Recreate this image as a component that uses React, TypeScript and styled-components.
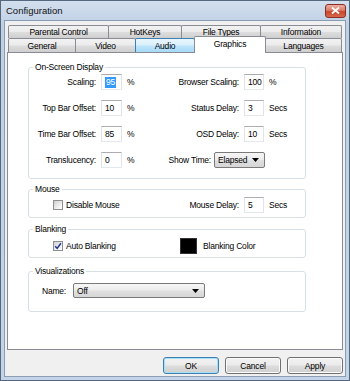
import * as React from "react";
import styled, { createGlobalStyle } from "styled-components";

const UI_FONT = `"Liberation Sans", Arial, sans-serif`;

const GlobalStyle = createGlobalStyle`
	html, body {
		margin: 0;
		padding: 0;
		background: #c5d5e8;
	}
	body {
		font-family: ${UI_FONT};
		font-size: 8.5px;
		letter-spacing: -0.2px;
		color: #000;
	}
	* {
		box-sizing: border-box;
	}
`;

const Window = styled.div`
	width: 350px;
	height: 381px;
	display: flex;
	flex-direction: column;
	border: 1px solid #55687d;
	background: linear-gradient(#d3dfee, #bfd0e5 24px, #c4d4e8);
`;

const TitleBar = styled.div`
	height: 19px;
	display: flex;
	align-items: center;
	justify-content: space-between;
	padding: 0 3px 0 5px;
`;

const Title = styled.span`
	font-size: 9.5px;
	letter-spacing: 0;
	color: #111;
`;

const CloseButton = styled.div`
	width: 21px;
	height: 14px;
	border: 1px solid #8b2d22;
	border-radius: 3px;
	background: linear-gradient(#eab1a4, #d97a67 45%, #c8452c 55%, #d66a4c);
	display: flex;
	align-items: center;
	justify-content: center;
`;

const Body = styled.div`
	flex: 1;
	margin: 0 3px 3px;
	border: 1px solid #8a9cb2;
	background: #f0f0f0;
	padding: 4px 2px 2px 2px;
	display: flex;
	flex-direction: column;
`;

const TabRow = styled.div`
	display: flex;
	padding-left: 1px;
`;

type TabState = "normal" | "hot" | "selected";

const Tab = styled.div<{ $w: number; $h: number; $state?: TabState }>`
	position: relative;
	width: ${(p) => p.$w}px;
	height: ${(p) => (p.$state === "selected" ? p.$h + 3 : p.$h)}px;
	margin-right: -1px;
	margin-top: ${(p) => (p.$state === "selected" ? -2 : 0)}px;
	margin-bottom: ${(p) => (p.$state === "selected" ? -1 : 0)}px;
	padding-bottom: ${(p) => (p.$state === "selected" ? 3 : 0)}px;
	z-index: ${(p) => (p.$state === "normal" || !p.$state ? 0 : 1)};
	border: 1px solid ${(p) => (p.$state === "hot" ? "#3c7fb1" : "#898c95")};
	border-bottom: none;
	border-radius: 2px 2px 0 0;
	background: ${(p) =>
		p.$state === "selected"
			? "#fff"
			: p.$state === "hot"
			? "linear-gradient(#eaf6fd, #d9f0fc 48%, #bee6fd 52%, #a7d9f5)"
			: "linear-gradient(#f2f2f2, #ebebeb 48%, #dddddd 52%, #cfcfcf)"};
	display: flex;
	align-items: center;
	justify-content: center;
	white-space: nowrap;
`;

const Panel = styled.div`
	flex: 1;
	background: #fff;
	border: 1px solid #898c95;
	padding: 9px 0 0 20px;
	display: flex;
	flex-direction: column;
`;

const Group = styled.fieldset<{ $top?: number }>`
	margin: ${(p) => p.$top ?? 0}px 0 0;
	padding: 0;
	width: 278px;
	min-inline-size: 0;
	border: 1px solid #d5dfe5;
	border-radius: 3px;
`;

const Legend = styled.legend`
	margin-left: 4px;
	padding: 0 2px;
	line-height: 11px;
	height: 11px;
`;

const Rows = styled.div<{ $pt: number; $pb: number }>`
	display: grid;
	grid-template-columns: 136px 1fr;
	row-gap: 10px;
	align-items: center;
	padding: ${(p) => p.$pt}px 0 ${(p) => p.$pb}px;
`;

const Field = styled.div<{ $label: number; $gap?: number }>`
	display: grid;
	grid-template-columns: ${(p) => p.$label}px auto auto;
	column-gap: ${(p) => p.$gap ?? 5}px;
	align-items: center;
	justify-content: start;
`;

const FieldLabel = styled.span`
	text-align: right;
	white-space: nowrap;
`;

const TextBox = styled.div<{ $w: number }>`
	width: ${(p) => p.$w}px;
	height: 16px;
	border: 1px solid #e2e3ea;
	border-top-color: #abadb3;
	border-bottom-color: #e3e9ef;
	background: #fff;
	padding-left: 3px;
	display: flex;
	align-items: center;
`;

const Selected = styled.span`
	background: #3399ff;
	color: #fff;
	padding: 0 1px;
	line-height: 11px;
`;

const Combo = styled.div<{ $w: number; $h: number }>`
	width: ${(p) => p.$w}px;
	height: ${(p) => p.$h}px;
	border: 1px solid #7a7a7a;
	border-radius: 2px;
	background: linear-gradient(#f6f6f6, #ececec 48%, #e0e0e0 52%, #d6d6d6);
	display: flex;
	align-items: center;
	justify-content: space-between;
	padding: 0 5px 0 3px;
`;

const CheckRow = styled.div`
	display: flex;
	align-items: center;
	gap: 3px;
	padding-left: 24px;
`;

const CheckBox = styled.span`
	width: 10px;
	height: 10px;
	border: 1px solid #8e8f8f;
	background: linear-gradient(135deg, #d0d0d0, #f4f4f4 70%, #fff);
	display: flex;
	align-items: center;
	justify-content: center;
`;

const ColorRow = styled.div`
	display: flex;
	align-items: center;
	gap: 6px;
	padding-left: 15px;
`;

const Swatch = styled.span`
	width: 17px;
	height: 16px;
	background: #000;
	border: 1px solid #333;
`;

const NameRow = styled.div`
	display: flex;
	align-items: center;
	gap: 5px;
	padding: 6px 0 13px 13px;
`;

const NameLabel = styled.span`
	width: 26px;
`;

const ButtonRow = styled.div`
	display: flex;
	justify-content: flex-end;
	gap: 6px;
	margin-top: 7px;
`;

const Button = styled.div<{ $default?: boolean }>`
	width: 56px;
	height: 17px;
	border: 1px solid ${(p) => (p.$default ? "#3c7fb1" : "#707070")};
	border-radius: 3px;
	box-shadow: inset 0 0 0 1px ${(p) => (p.$default ? "#a9def8" : "#fbfbfb")};
	background: linear-gradient(#f2f2f2, #ebebeb 48%, #dddddd 52%, #cfcfcf);
	display: flex;
	align-items: center;
	justify-content: center;
`;

const Arrow = () => (
	<svg width="7" height="4" viewBox="0 0 7 4">
		<path d="M0 0h7L3.5 4z" fill="#000" />
	</svg>
);

const Check = () => (
	<svg width="8" height="8" viewBox="0 0 8 8">
		<path d="M1.2 4.2 L3.2 6.4 L6.9 1.2" fill="none" stroke="#23388e" strokeWidth="1.5" />
	</svg>
);

const row1 = [
	{ label: "Parental Control", w: 101 },
	{ label: "HotKeys", w: 74 },
	{ label: "File Types", w: 80 },
	{ label: "Information", w: 82 },
];

const row2: { label: string; w: number; state?: TabState }[] = [
	{ label: "General", w: 68 },
	{ label: "Video", w: 61 },
	{ label: "Audio", w: 60, state: "hot" },
	{ label: "Graphics", w: 72, state: "selected" },
	{ label: "Languages", w: 77 },
];

const App = () => {
	return (
		<>
			<GlobalStyle />
			<Window>
				<TitleBar>
					<Title>Configuration</Title>
					<CloseButton>
						<svg width="9" height="7" viewBox="0 0 9 7">
							<path d="M1 0.5 L8 6.5 M8 0.5 L1 6.5" stroke="#fff" strokeWidth="1.8" />
						</svg>
					</CloseButton>
				</TitleBar>
				<Body>
					<TabRow>
						{row1.map((t) => (
							<Tab key={t.label} $w={t.w} $h={13}>
								{t.label}
							</Tab>
						))}
					</TabRow>
					<TabRow>
						{row2.map((t) => (
							<Tab key={t.label} $w={t.w} $h={14} $state={t.state}>
								{t.label}
							</Tab>
						))}
					</TabRow>
					<Panel>
						<Group>
							<Legend>On-Screen Display</Legend>
							<Rows $pt={1} $pb={10}>
								<Field $label={67}>
									<FieldLabel>Scaling:</FieldLabel>
									<TextBox $w={21}>
										<Selected>95</Selected>
									</TextBox>
									<span>%</span>
								</Field>
								<Field $label={74}>
									<FieldLabel>Browser Scaling:</FieldLabel>
									<TextBox $w={20}>100</TextBox>
									<span>%</span>
								</Field>
								<Field $label={67}>
									<FieldLabel>Top Bar Offset:</FieldLabel>
									<TextBox $w={21}>10</TextBox>
									<span>%</span>
								</Field>
								<Field $label={74}>
									<FieldLabel>Status Delay:</FieldLabel>
									<TextBox $w={20}>3</TextBox>
									<span>Secs</span>
								</Field>
								<Field $label={67}>
									<FieldLabel>Time Bar Offset:</FieldLabel>
									<TextBox $w={21}>85</TextBox>
									<span>%</span>
								</Field>
								<Field $label={74}>
									<FieldLabel>OSD Delay:</FieldLabel>
									<TextBox $w={20}>10</TextBox>
									<span>Secs</span>
								</Field>
								<Field $label={67}>
									<FieldLabel>Translucency:</FieldLabel>
									<TextBox $w={21}>0</TextBox>
									<span>%</span>
								</Field>
								<Field $label={46} $gap={3}>
									<FieldLabel>Show Time:</FieldLabel>
									<Combo $w={51} $h={16}>
										Elapsed
										<Arrow />
									</Combo>
								</Field>
							</Rows>
						</Group>

						<Group $top={5}>
							<Legend>Mouse</Legend>
							<Rows $pt={2} $pb={4}>
								<CheckRow>
									<CheckBox />
									Disable Mouse
								</CheckRow>
								<Field $label={74}>
									<FieldLabel>Mouse Delay:</FieldLabel>
									<TextBox $w={20}>5</TextBox>
									<span>Secs</span>
								</Field>
							</Rows>
						</Group>

						<Group $top={6}>
							<Legend>Blanking</Legend>
							<Rows $pt={3} $pb={3}>
								<CheckRow>
									<CheckBox>
										<Check />
									</CheckBox>
									Auto Blanking
								</CheckRow>
								<ColorRow>
									<Swatch />
									Blanking Color
								</ColorRow>
							</Rows>
						</Group>

						<Group $top={8}>
							<Legend>Visualizations</Legend>
							<NameRow>
								<NameLabel>Name:</NameLabel>
								<Combo $w={132} $h={15}>
									Off
									<Arrow />
								</Combo>
							</NameRow>
						</Group>
					</Panel>
					<ButtonRow>
						<Button $default>OK</Button>
						<Button>Cancel</Button>
						<Button>Apply</Button>
					</ButtonRow>
				</Body>
			</Window>
		</>
	);
};

export default App;
